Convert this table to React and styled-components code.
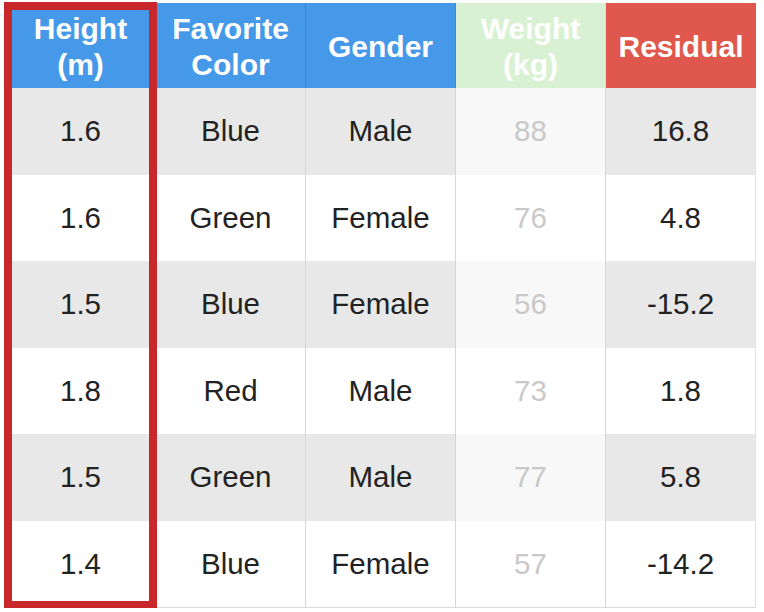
import React from "react";
import styled, { createGlobalStyle } from "styled-components";

const GlobalStyle = createGlobalStyle`
  html, body {
    margin: 0;
    padding: 0;
    background: #ffffff;
  }
  body {
    font-family: "Liberation Sans", Arial, Helvetica, sans-serif;
  }
`;

const headers = [
  { label: ["Height", "(m)"], tone: "blue" },
  { label: ["Favorite", "Color"], tone: "blue" },
  { label: ["Gender"], tone: "blue" },
  { label: ["Weight", "(kg)"], tone: "green" },
  { label: ["Residual"], tone: "red" },
];

const rows = [
  ["1.6", "Blue", "Male", "88", "16.8"],
  ["1.6", "Green", "Female", "76", "4.8"],
  ["1.5", "Blue", "Female", "56", "-15.2"],
  ["1.8", "Red", "Male", "73", "1.8"],
  ["1.5", "Green", "Male", "77", "5.8"],
  ["1.4", "Blue", "Female", "57", "-14.2"],
];

const headBg = {
  blue: "#4599e8",
  green: "#d9f1d3",
  red: "#e0574d",
};

const headLine = {
  blue: "#3a88d4",
  green: "#cfe8c8",
  red: "#e0574d",
};

export default function App() {
  return (
    <>
      <GlobalStyle />
      <Page>
        <Table>
          {headers.map((h, i) => (
            <HeadCell key={i} $tone={h.tone}>
              {h.label.map((line) => (
                <span key={line}>{line}</span>
              ))}
            </HeadCell>
          ))}
          {rows.map((row, r) =>
            row.map((value, c) => (
              <Cell key={r + "-" + c} $stripe={r % 2 === 0} $muted={c === 3}>
                {value}
              </Cell>
            ))
          )}
          <Highlight />
        </Table>
      </Page>
    </>
  );
}

let Page = styled.div`
  padding: 3px 0 0 6px;
`;

let Table = styled.div`
  position: relative;
  display: grid;
  grid-template-columns: repeat(5, 150px);
  grid-template-rows: 85px repeat(6, 86.5px);
  width: 750px;
  border-bottom: 1px solid #dcdcdc;
`;

let HeadCell = styled.div`
  display: flex;
  flex-direction: column;
  align-items: center;
  justify-content: center;
  padding-top: 2px;
  background: ${(p) => headBg[p.$tone]};
  border-right: 1px solid ${(p) => headLine[p.$tone]};
  color: #ffffff;
  font-weight: 700;
  font-size: 30px;
  line-height: 36px;
  text-align: center;

  &:nth-child(5) {
    border-right: none;
  }
`;

let Cell = styled.div`
  display: flex;
  align-items: center;
  justify-content: center;
  background: ${(p) =>
    p.$muted ? (p.$stripe ? "#f8f8f8" : "#ffffff") : p.$stripe ? "#e8e8e8" : "#ffffff"};
  border-right: 1px solid #d6d6d6;
  color: ${(p) => (p.$muted ? "#c9c9c9" : "#222222")};
  font-size: 29.5px;

  &:nth-child(5n) {
    border-right: 1px solid #e4e4e4;
  }
`;

let Highlight = styled.div`
  position: absolute;
  left: -2px;
  top: -1px;
  width: 153px;
  height: 607px;
  box-sizing: border-box;
  border: 8px solid #c8272b;
  pointer-events: none;
`;
